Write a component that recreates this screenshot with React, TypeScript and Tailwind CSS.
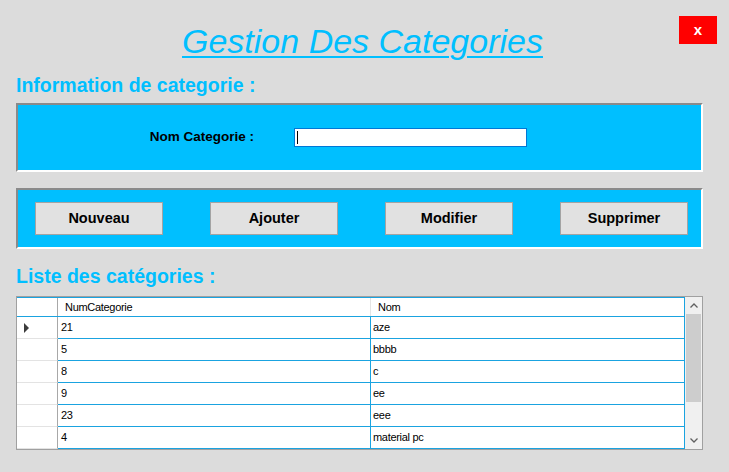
import React from "react";

const rows: [string, string][] = [
  ["21", "aze"],
  ["5", "bbbb"],
  ["8", "c"],
  ["9", "ee"],
  ["23", "eee"],
  ["4", "material pc"],
];

function Btn({ label }: { label: string }) {
  return (
    <div className="w-[128px] h-[33px] bg-[#e1e1e1] border border-[#a3a3a3] flex items-center justify-center text-[14.5px] font-bold text-black">
      {label}
    </div>
  );
}

export default function App() {
  return (
    <div
      className="w-[729px] h-[472px] bg-[#dcdcdc] relative overflow-hidden"
      style={{ fontFamily: '"Liberation Sans", Arial, sans-serif' }}
    >
      <div className="absolute top-[16px] left-[679px] w-[38px] h-[28px] bg-[#ff0000] text-white flex items-center justify-center text-[15px] font-bold leading-none pb-[2px]">
        x
      </div>

      <div className="mt-[22px] h-[38px] pr-[4px] text-center text-[34px] leading-[38px] italic text-[#00bfff]">
        <span className="underline decoration-[2px] underline-offset-[3px]">
          Gestion Des Categories
        </span>
      </div>

      <div className="pl-[16px] pr-[26px]">
        <div className="mt-[15px] h-[20px] leading-[20px] text-[19.5px] font-bold text-[#00bfff]">
          Information de categorie :
        </div>

        <div className="mt-[8px] h-[69px] bg-[#00bfff] border-2 border-t-[#8a8a8a] border-l-[#8a8a8a] border-b-white border-r-white flex items-center pl-[100px]">
          <div className="w-[136px] text-right text-[13.5px] font-bold text-black">
            Nom Categorie :
          </div>
          <div className="ml-[40px] w-[233px] h-[19px] bg-white border border-[#0078d7] flex items-center pl-[2px]">
            <span className="w-[1px] h-[13px] bg-black" />
          </div>
        </div>

        <div className="mt-[16px] h-[61px] bg-[#00bfff] border-2 border-t-[#8a8a8a] border-l-[#8a8a8a] border-b-white border-r-white flex items-center pl-[17px] gap-[47px]">
          <Btn label="Nouveau" />
          <Btn label="Ajouter" />
          <Btn label="Modifier" />
          <Btn label="Supprimer" />
        </div>

        <div className="mt-[17px] h-[20px] leading-[20px] text-[19.5px] font-bold text-[#00bfff]">
          Liste des catégories :
        </div>

        <div className="mt-[10px] border border-[#a0a0a0] flex bg-white">
          <div className="flex-1 flex flex-col text-[11px] text-black tracking-[-0.3px]">
            <div className="flex h-[20px] border-t border-b border-[#1aa3e0]">
              <div className="w-[41px] border-r border-[#a8a8a8]" />
              <div className="w-[313px] pl-[7px] flex items-center border-r border-[#e4e4e4]">
                NumCategorie
              </div>
              <div className="flex-1 pl-[7px] flex items-center border-r border-[#1aa3e0]">
                Nom
              </div>
            </div>
            {rows.map(([n, nom], i) => (
              <div key={i} className="flex h-[22px]">
                <div className="w-[41px] border-r border-[#a8a8a8] border-b border-b-[#e3e3e3] flex items-center pl-[7px]">
                  {i === 0 && (
                    <svg width="6" height="10" viewBox="0 0 6 10">
                      <path d="M0 0 L5 5 L0 10 Z" fill="#3c3c3c" />
                    </svg>
                  )}
                </div>
                <div className="w-[313px] pl-[3px] flex items-center border-r border-b border-[#1aa3e0]">
                  {n}
                </div>
                <div className="flex-1 pl-[2px] flex items-center border-r border-b border-[#1aa3e0]">
                  {nom}
                </div>
              </div>
            ))}
          </div>
          <div className="w-[17px] bg-[#f0f0f0] flex flex-col">
            <div className="h-[17px] flex items-center justify-center">
              <svg width="8" height="5" viewBox="0 0 8 5">
                <path d="M0.5 4.5 L4 1 L7.5 4.5" stroke="#606060" strokeWidth="1.3" fill="none" />
              </svg>
            </div>
            <div className="mx-[1px] h-[88px] bg-[#cdcdcd]" />
            <div className="flex-1" />
            <div className="h-[17px] flex items-center justify-center">
              <svg width="8" height="5" viewBox="0 0 8 5">
                <path d="M0.5 0.5 L4 4 L7.5 0.5" stroke="#606060" strokeWidth="1.3" fill="none" />
              </svg>
            </div>
          </div>
        </div>
      </div>
    </div>
  );
}
